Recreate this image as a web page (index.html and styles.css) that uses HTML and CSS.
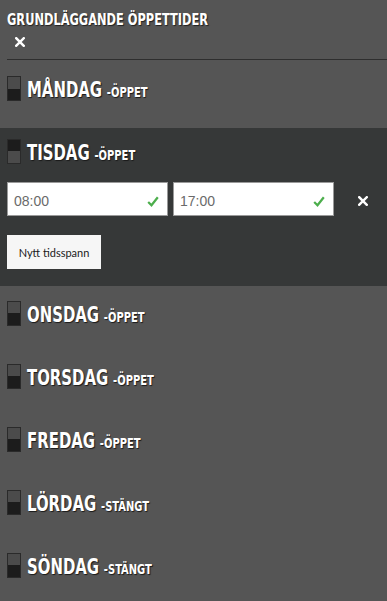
FILE: index.html
```html
<!DOCTYPE html>
<html lang="sv">
<head>
<meta charset="utf-8">
<title>Grundläggande öppettider</title>
<link rel="stylesheet" href="styles.css">
</head>
<body>
<div class="page">
  <header class="head">
    <h1 class="title">GRUNDLÄGGANDE ÖPPETTIDER</h1>
    <button class="close" type="button" aria-label="Stäng"><svg viewBox="0 0 10 10" width="10" height="10"><path d="M1.2 1.2 L8.8 8.8 M8.8 1.2 L1.2 8.8" stroke="#fff" stroke-width="2.4" stroke-linecap="square" fill="none"/></svg></button>
  </header>
  <ul class="days">
    <li class="day">
      <div class="day-head"><span class="toggle"></span><span class="label"><span class="name">MÅNDAG</span><span class="state">-ÖPPET</span></span></div>
    </li>
    <li class="day day-open">
      <div class="day-head"><span class="toggle on"></span><span class="label"><span class="name">TISDAG</span><span class="state">-ÖPPET</span></span></div>
      <div class="span-row">
        <label class="time"><span class="time-val">08:00</span><svg class="check" viewBox="0 0 12 11" width="12" height="11"><polyline points="1.2,6 4.5,9.3 10.8,1.2" fill="none" stroke="#4cae4c" stroke-width="2.2"/></svg></label>
        <label class="time"><span class="time-val">17:00</span><svg class="check" viewBox="0 0 12 11" width="12" height="11"><polyline points="1.2,6 4.5,9.3 10.8,1.2" fill="none" stroke="#4cae4c" stroke-width="2.2"/></svg></label>
        <button class="remove" type="button" aria-label="Ta bort"><svg viewBox="0 0 10 10" width="10" height="10"><path d="M1.2 1.2 L8.8 8.8 M8.8 1.2 L1.2 8.8" stroke="#fff" stroke-width="2.4" stroke-linecap="square" fill="none"/></svg></button>
      </div>
      <button class="add" type="button">Nytt tidsspann</button>
    </li>
    <li class="day">
      <div class="day-head"><span class="toggle"></span><span class="label"><span class="name">ONSDAG</span><span class="state">-ÖPPET</span></span></div>
    </li>
    <li class="day">
      <div class="day-head"><span class="toggle"></span><span class="label"><span class="name">TORSDAG</span><span class="state">-ÖPPET</span></span></div>
    </li>
    <li class="day">
      <div class="day-head"><span class="toggle"></span><span class="label"><span class="name">FREDAG</span><span class="state">-ÖPPET</span></span></div>
    </li>
    <li class="day">
      <div class="day-head"><span class="toggle"></span><span class="label"><span class="name">LÖRDAG</span><span class="state">-STÄNGT</span></span></div>
    </li>
    <li class="day">
      <div class="day-head"><span class="toggle"></span><span class="label"><span class="name">SÖNDAG</span><span class="state">-STÄNGT</span></span></div>
    </li>
  </ul>
</div>
</body>
</html>
```
FILE: styles.css
```css
html, body {
  margin: 0;
  padding: 0;
  background: #555555;
  overflow: hidden;
}
.page {
  font-family: "DejaVu Sans Condensed", "DejaVu Sans", sans-serif;
  color: #ffffff;
}
.head {
  margin-left: 7px;
  padding-top: 11px;
  padding-bottom: 12px;
  border-bottom: 1px solid #2e2e2e;
  display: flex;
  flex-direction: column;
  align-items: flex-start;
}
.title {
  margin: 0;
  font-size: 15px;
  line-height: 18px;
  font-weight: bold;
  text-shadow: 1px 1px 1px #222;
  transform: scaleX(0.845);
  transform-origin: left center;
  white-space: nowrap;
}
.close {
  background: none;
  border: 0;
  padding: 0;
  margin: 8px 0 0 8px;
  display: block;
  line-height: 0;
}
.close svg, .remove svg {
  display: block;
}
.days {
  list-style: none;
  margin: 5px 0 0 0;
  padding: 0;
}
.day {
  height: 63px;
  box-sizing: border-box;
  padding: 11px 7px 0 7px;
}
.day-head {
  display: flex;
  align-items: flex-end;
  height: 25px;
}
.toggle {
  width: 12px;
  height: 23px;
  border: 1px solid #2a2a2a;
  background: linear-gradient(#4b4b4b 0 50%, #1c1c1c 50% 100%);
  flex: none;
}
.toggle.on {
  background: linear-gradient(#1c1c1c 0 50%, #4b4b4b 50% 100%);
}
.label {
  margin-left: 6px;
  display: inline-flex;
  align-items: baseline;
  transform: scaleX(0.79);
  transform-origin: left bottom;
  white-space: nowrap;
  text-shadow: 1px 1px 1px #1a1a1a;
  font-weight: bold;
}
.name {
  font-size: 21px;
  line-height: 22px;
}
.state {
  margin-left: 6px;
  font-size: 14px;
  line-height: 14px;
}
.day-open {
  height: 158px;
  margin-bottom: 4px;
  background: #363838;
}
.span-row {
  margin-top: 18px;
  display: flex;
  align-items: center;
  gap: 5px;
}
.time {
  width: 161px;
  height: 34px;
  box-sizing: border-box;
  background: #ffffff;
  border: 1px solid #9a9a9a;
  display: flex;
  align-items: flex-start;
  justify-content: space-between;
  padding: 11px 8px 0 6px;
}
.time-val {
  font-family: "Liberation Sans", Arial, sans-serif;
  font-size: 14px;
  line-height: 14px;
  color: #6a6a6a;
}
.check {
  margin-top: 2px;
}
.remove {
  background: none;
  border: 0;
  padding: 0;
  margin-left: 19px;
  margin-top: 4px;
  display: block;
  line-height: 0;
}
.add {
  display: block;
  margin-top: 19px;
  width: 94px;
  height: 34px;
  border: 0;
  background: #f6f6f6;
  color: #1a1a1a;
  font-family: Lato, "Open Sans", sans-serif;
  font-size: 11px;
  padding: 0;
}
```
